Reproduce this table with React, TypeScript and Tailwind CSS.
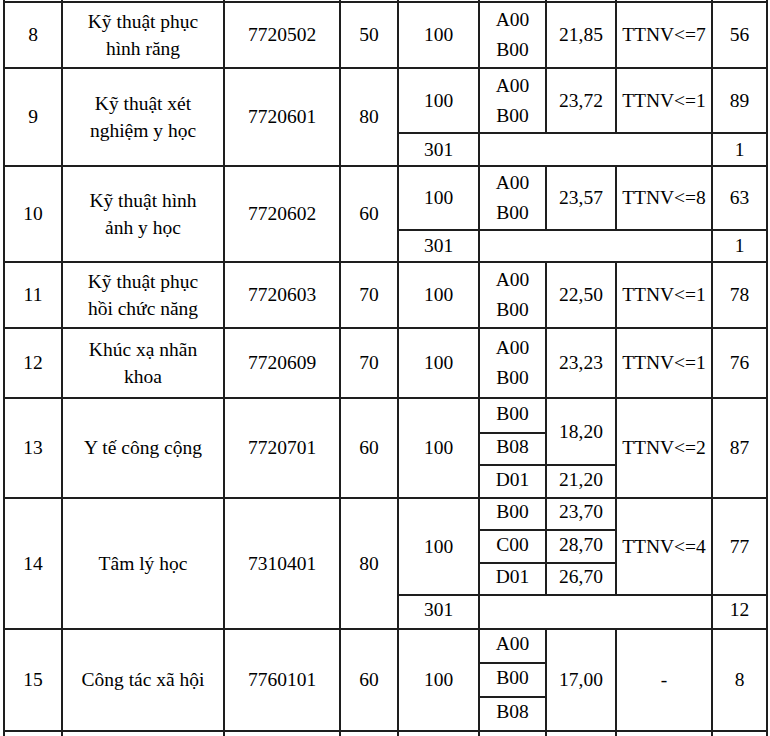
import type { ReactNode } from "react";

// ô trong bảng: nền trắng, khe hở của grid làm đường kẻ
function Cell({ children, className = "" }: { children?: ReactNode; className?: string }) {
  return (
    <div className={`flex items-center justify-center bg-white text-center leading-[22px] ${className}`}>
      {children}
    </div>
  );
}

function Name({ lines }: { lines: string[] }) {
  return (
    <div className="leading-[27px]">
      {lines.map((l, i) => (
        <div key={i}>{l}</div>
      ))}
    </div>
  );
}

function Combo({ codes }: { codes: string[] }) {
  return (
    <div className="leading-[30px]">
      {codes.map((c) => (
        <div key={c}>{c}</div>
      ))}
    </div>
  );
}

function EmptyRow() {
  return (
    <>
      {Array.from({ length: 9 }).map((_, i) => (
        <Cell key={i} />
      ))}
    </>
  );
}

export default function App() {
  return (
    <div className="h-[736px] w-[770px] overflow-hidden bg-white font-['Liberation_Serif','Times_New_Roman',serif]">
      <div className="ml-[3px] grid w-[765px] gap-[2px] bg-[#1e1e1e] px-[2px] text-[19.5px] text-black grid-cols-[56px_160px_114px_56px_79px_65px_68px_94px_53px] grid-rows-[1px_64px_63px_31px_62px_30px_64px_68px_33px_30px_31px_30px_31px_30px_32px_32px_32px_32px_40px]">
        <EmptyRow />

        {/* 8 */}
        <Cell>8</Cell>
        <Cell><Name lines={["Kỹ thuật phục", "hình răng"]} /></Cell>
        <Cell>7720502</Cell>
        <Cell>50</Cell>
        <Cell>100</Cell>
        <Cell><Combo codes={["A00", "B00"]} /></Cell>
        <Cell>21,85</Cell>
        <Cell>TTNV&lt;=7</Cell>
        <Cell>56</Cell>

        {/* 9 */}
        <Cell className="row-span-2">9</Cell>
        <Cell className="row-span-2"><Name lines={["Kỹ thuật xét", "nghiệm y học"]} /></Cell>
        <Cell className="row-span-2">7720601</Cell>
        <Cell className="row-span-2">80</Cell>
        <Cell>100</Cell>
        <Cell><Combo codes={["A00", "B00"]} /></Cell>
        <Cell>23,72</Cell>
        <Cell>TTNV&lt;=1</Cell>
        <Cell>89</Cell>
        <Cell>301</Cell>
        <Cell className="col-span-3" />
        <Cell>1</Cell>

        {/* 10 */}
        <Cell className="row-span-2">10</Cell>
        <Cell className="row-span-2"><Name lines={["Kỹ thuật hình", "ảnh y học"]} /></Cell>
        <Cell className="row-span-2">7720602</Cell>
        <Cell className="row-span-2">60</Cell>
        <Cell>100</Cell>
        <Cell><Combo codes={["A00", "B00"]} /></Cell>
        <Cell>23,57</Cell>
        <Cell>TTNV&lt;=8</Cell>
        <Cell>63</Cell>
        <Cell>301</Cell>
        <Cell className="col-span-3" />
        <Cell>1</Cell>

        {/* 11 */}
        <Cell>11</Cell>
        <Cell><Name lines={["Kỹ thuật phục", "hồi chức năng"]} /></Cell>
        <Cell>7720603</Cell>
        <Cell>70</Cell>
        <Cell>100</Cell>
        <Cell><Combo codes={["A00", "B00"]} /></Cell>
        <Cell>22,50</Cell>
        <Cell>TTNV&lt;=1</Cell>
        <Cell>78</Cell>

        {/* 12 */}
        <Cell>12</Cell>
        <Cell><Name lines={["Khúc xạ nhãn", "khoa"]} /></Cell>
        <Cell>7720609</Cell>
        <Cell>70</Cell>
        <Cell>100</Cell>
        <Cell><Combo codes={["A00", "B00"]} /></Cell>
        <Cell>23,23</Cell>
        <Cell>TTNV&lt;=1</Cell>
        <Cell>76</Cell>

        {/* 13 */}
        <Cell className="row-span-3">13</Cell>
        <Cell className="row-span-3">Y tế công cộng</Cell>
        <Cell className="row-span-3">7720701</Cell>
        <Cell className="row-span-3">60</Cell>
        <Cell className="row-span-3">100</Cell>
        <Cell className="pb-1">B00</Cell>
        <Cell className="row-span-2">18,20</Cell>
        <Cell className="row-span-3">TTNV&lt;=2</Cell>
        <Cell className="row-span-3">87</Cell>
        <Cell className="pb-1">B08</Cell>
        <Cell className="pb-1">D01</Cell>
        <Cell className="pb-1">21,20</Cell>

        {/* 14 */}
        <Cell className="row-span-4">14</Cell>
        <Cell className="row-span-4">Tâm lý học</Cell>
        <Cell className="row-span-4">7310401</Cell>
        <Cell className="row-span-4">80</Cell>
        <Cell className="row-span-3">100</Cell>
        <Cell className="pb-1">B00</Cell>
        <Cell className="pb-1">23,70</Cell>
        <Cell className="row-span-3">TTNV&lt;=4</Cell>
        <Cell className="row-span-3">77</Cell>
        <Cell className="pb-1">C00</Cell>
        <Cell className="pb-1">28,70</Cell>
        <Cell className="pb-1">D01</Cell>
        <Cell className="pb-1">26,70</Cell>
        <Cell className="pb-1">301</Cell>
        <Cell className="col-span-3" />
        <Cell className="pb-1">12</Cell>

        {/* 15 */}
        <Cell className="row-span-3">15</Cell>
        <Cell className="row-span-3">Công tác xã hội</Cell>
        <Cell className="row-span-3">7760101</Cell>
        <Cell className="row-span-3">60</Cell>
        <Cell className="row-span-3">100</Cell>
        <Cell className="pb-1">A00</Cell>
        <Cell className="row-span-3">17,00</Cell>
        <Cell className="row-span-3">-</Cell>
        <Cell className="row-span-3">8</Cell>
        <Cell className="pb-1">B00</Cell>
        <Cell className="pb-1">B08</Cell>

        <EmptyRow />
      </div>
    </div>
  );
}
